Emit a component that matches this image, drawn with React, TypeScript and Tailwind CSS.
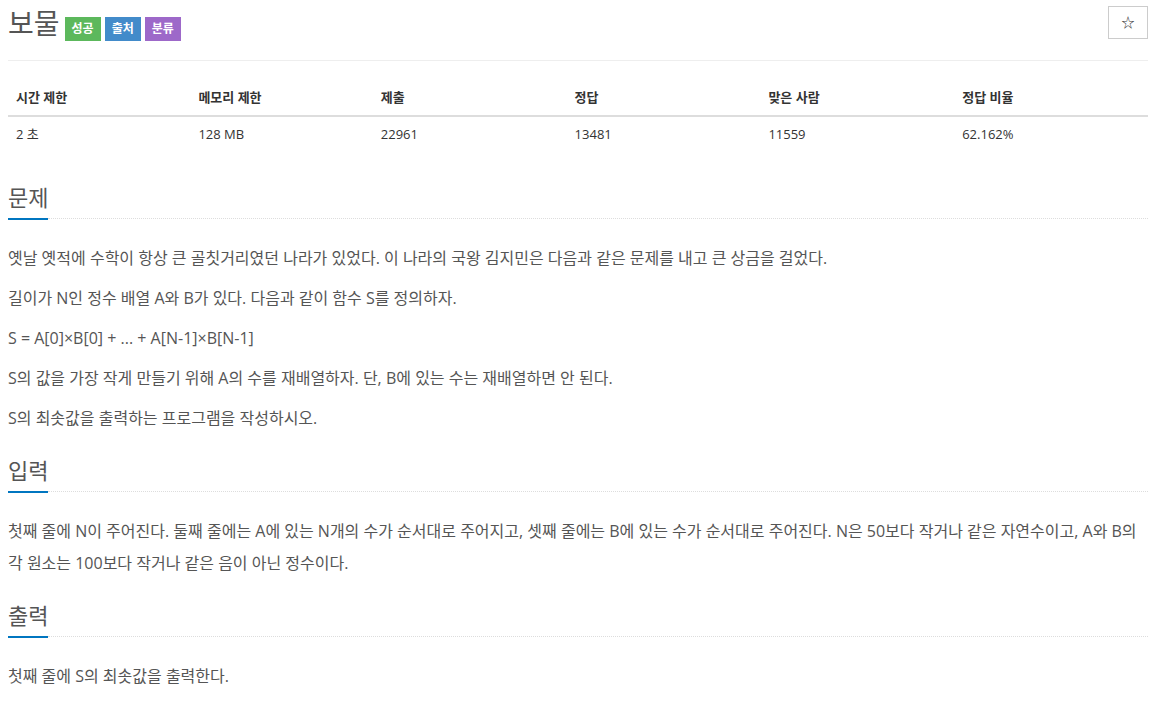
import React from 'react';

const stats = [
  { label: '시간 제한', value: '2 초', w: 'w-[16%]' },
  { label: '메모리 제한', value: '128 MB', w: 'w-[16%]' },
  { label: '제출', value: '22961', w: 'w-[17%]' },
  { label: '정답', value: '13481', w: 'w-[17%]' },
  { label: '맞은 사람', value: '11559', w: 'w-[17%]' },
  { label: '정답 비율', value: '62.162%', w: 'w-[17%]' },
];

const SectionTitle: React.FC<{ title: string }> = ({ title }) => (
  <div className="flex items-end">
    <h2 className="text-[22px] leading-[30px] pb-[6px] border-b-2 border-[#0076c0] text-[#555]">{title}</h2>
    <div className="flex-1 border-b border-dotted border-[#ddd] mb-[1px]" />
  </div>
);

const App: React.FC = () => {
  return (
    <div className="pl-2 pr-[6px] bg-white min-h-[702px] text-[#333]" style={{ fontFamily: '"Open Sans", "Noto Sans CJK KR", sans-serif' }}>
      {/* Header */}
      <div className="flex items-start justify-between h-[61px] border-b border-[#eee]">
        <h1 className="flex items-end mt-[6px] text-[28px] leading-[34px] text-[#555]">
          <span>보물</span>
          <span className="flex gap-1 ml-[5px] mb-[-1px]">
            <span className="px-[7px] h-[24px] leading-[24px] text-[12px] font-bold text-white bg-[#5cb85c]">성공</span>
            <span className="px-[7px] h-[24px] leading-[24px] text-[12px] font-bold text-white bg-[#428bca]">출처</span>
            <span className="px-[7px] h-[24px] leading-[24px] text-[12px] font-bold text-white bg-[#9d68c9]">분류</span>
          </span>
        </h1>
        <button className="mt-[6px] w-[40px] h-[33px] border border-[#ccc] bg-white flex items-center justify-center text-[13px] text-[#333]">
          ☆
        </button>
      </div>

      {/* Stats table */}
      <table className="w-full mt-[19px] text-[13px] leading-[19px] border-collapse">
        <thead>
          <tr className="border-b-2 border-[#ddd]">
            {stats.map((s) => (
              <th key={s.label} className={`${s.w} text-left font-bold px-2 py-2`}>{s.label}</th>
            ))}
          </tr>
        </thead>
        <tbody>
          <tr>
            {stats.map((s) => (
              <td key={s.label} className="px-2 py-2">{s.value}</td>
            ))}
          </tr>
        </tbody>
      </table>

      {/* 문제 */}
      <section className="mt-[30px]">
        <SectionTitle title="문제" />
        <div className="mt-[22px] text-[16px] leading-[32px] text-[#555]">
          <p className="mb-2">옛날 옛적에 수학이 항상 큰 골칫거리였던 나라가 있었다. 이 나라의 국왕 김지민은 다음과 같은 문제를 내고 큰 상금을 걸었다.</p>
          <p className="mb-2">길이가 N인 정수 배열 A와 B가 있다. 다음과 같이 함수 S를 정의하자.</p>
          <p className="mb-2">S = A[0]×B[0] + ... + A[N-1]×B[N-1]</p>
          <p className="mb-2">S의 값을 가장 작게 만들기 위해 A의 수를 재배열하자. 단, B에 있는 수는 재배열하면 안 된다.</p>
          <p className="mb-2">S의 최솟값을 출력하는 프로그램을 작성하시오.</p>
        </div>
      </section>

      {/* 입력 */}
      <section className="mt-[21px]">
        <SectionTitle title="입력" />
        <div className="mt-[22px] text-[16px] leading-[32px] text-[#555]">
          <p className="mb-2">첫째 줄에 N이 주어진다. 둘째 줄에는 A에 있는 N개의 수가 순서대로 주어지고, 셋째 줄에는 B에 있는 수가 순서대로 주어진다. N은 50보다 작거나 같은 자연수이고, A와 B의 각 원소는 100보다 작거나 같은 음이 아닌 정수이다.</p>
        </div>
      </section>

      {/* 출력 */}
      <section className="mt-[21px]">
        <SectionTitle title="출력" />
        <div className="mt-[22px] text-[16px] leading-[32px] text-[#555]">
          <p className="mb-2">첫째 줄에 S의 최솟값을 출력한다.</p>
        </div>
      </section>
    </div>
  );
};

export default App;
